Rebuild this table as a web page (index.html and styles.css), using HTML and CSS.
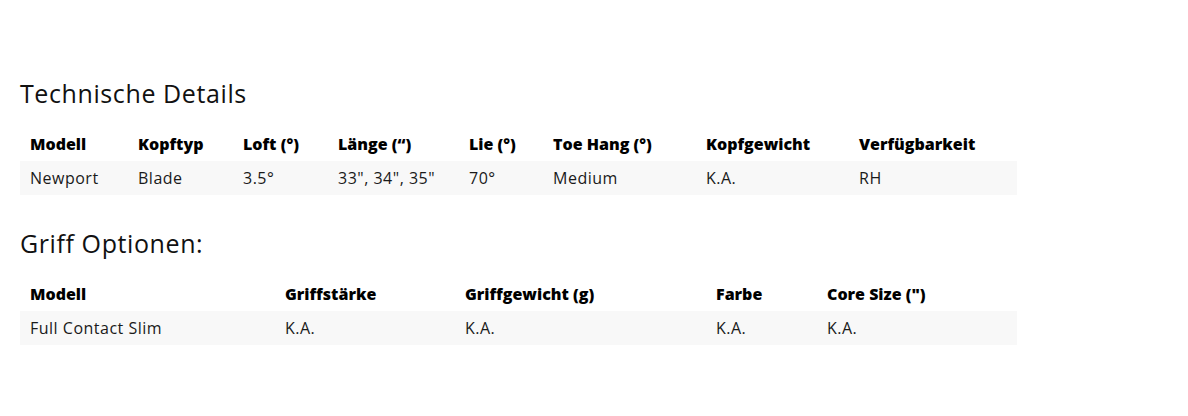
FILE: index.html
```html
<!DOCTYPE html>
<html lang="de">
<head>
<meta charset="utf-8">
<title>Technische Details</title>
<link rel="stylesheet" href="styles.css">
</head>
<body>
<main class="page">
  <section class="block">
    <h2 class="title">Technische Details</h2>
    <table class="spec">
      <colgroup>
        <col class="c108"><col class="c105"><col class="c95"><col class="c131"><col class="c84"><col class="c153"><col class="c153"><col class="c168">
      </colgroup>
      <thead>
        <tr><th>Modell</th><th>Kopftyp</th><th>Loft (°)</th><th>Länge (“)</th><th>Lie (°)</th><th>Toe Hang (°)</th><th>Kopfgewicht</th><th>Verfügbarkeit</th></tr>
      </thead>
      <tbody>
        <tr><td>Newport</td><td>Blade</td><td>3.5°</td><td>33", 34", 35"</td><td>70°</td><td>Medium</td><td>K.A.</td><td>RH</td></tr>
      </tbody>
    </table>
  </section>
  <section class="block">
    <h2 class="title">Griff Optionen:</h2>
    <table class="spec">
      <colgroup>
        <col class="c255"><col class="c180"><col class="c251"><col class="c111"><col class="c200">
      </colgroup>
      <thead>
        <tr><th>Modell</th><th>Griffstärke</th><th>Griffgewicht (g)</th><th>Farbe</th><th>Core Size (")</th></tr>
      </thead>
      <tbody>
        <tr><td>Full Contact Slim</td><td>K.A.</td><td>K.A.</td><td>K.A.</td><td>K.A.</td></tr>
      </tbody>
    </table>
  </section>
</main>
</body>
</html>
```
FILE: styles.css
```css
html, body {
  margin: 0;
  padding: 0;
  background: #ffffff;
}
body {
  font-family: "Open Sans", "Noto Sans", "Liberation Sans", sans-serif;
  color: #111111;
}
.page {
  padding: 76px 20px 0 20px;
  display: flex;
  flex-direction: column;
  gap: 31px;
}
.block {
  display: flex;
  flex-direction: column;
}
.title {
  margin: 0 0 17px 0;
  font-size: 25px;
  font-weight: 400;
  letter-spacing: 0.6px;
  line-height: 34px;
  color: #111111;
}
.spec {
  width: 997px;
  border-collapse: collapse;
  table-layout: fixed;
  font-size: 16px;
}
.spec th, .spec td {
  text-align: left;
  padding: 0 10px;
  height: 34px;
  white-space: nowrap;
}
.spec th {
  font-weight: 800;
  color: #000000;
}
.spec td {
  font-weight: 400;
  letter-spacing: 0.5px;
  color: #1a1a1a;
}
.spec tbody tr {
  background: #f8f8f8;
}
.c84 { width: 84px; }
.c95 { width: 95px; }
.c105 { width: 105px; }
.c108 { width: 108px; }
.c111 { width: 111px; }
.c131 { width: 131px; }
.c153 { width: 153px; }
.c168 { width: 168px; }
.c180 { width: 180px; }
.c200 { width: 200px; }
.c251 { width: 251px; }
.c255 { width: 255px; }
```
